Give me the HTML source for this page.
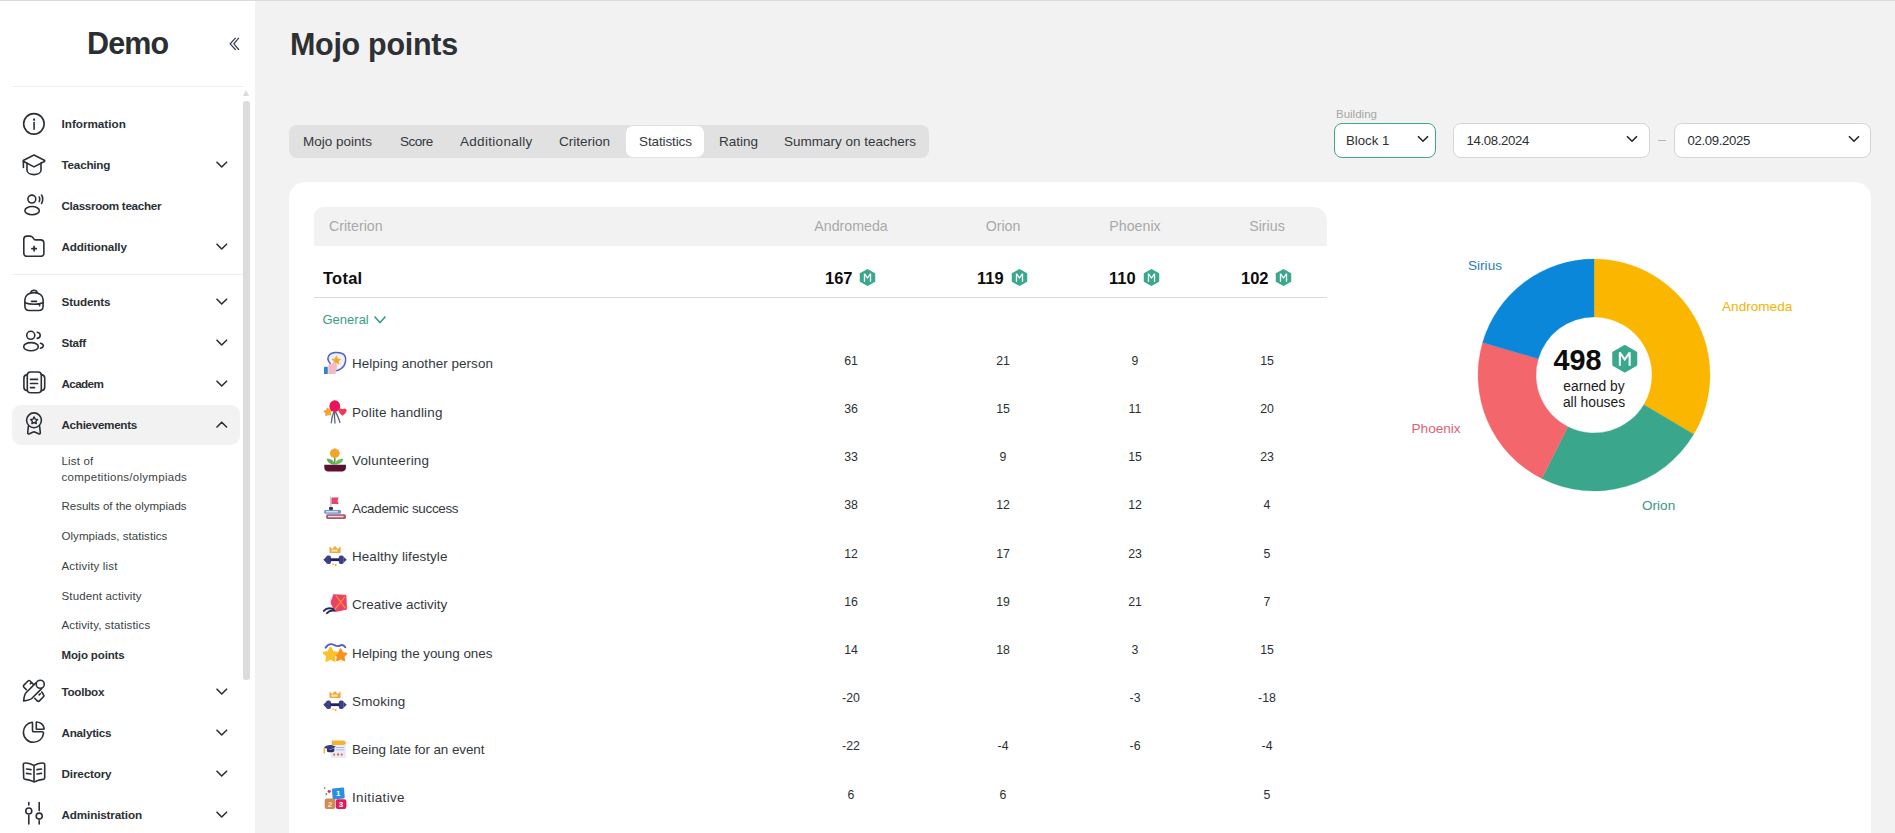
<!DOCTYPE html>
<html><head><meta charset="utf-8">
<style>
*{box-sizing:border-box;margin:0;padding:0}
html,body{width:1895px;height:833px;overflow:hidden;background:#f2f2f2;font-family:"Liberation Sans",sans-serif;color:#2b3035}
.abs{position:absolute;white-space:nowrap}
#topline{position:absolute;left:0;top:0;width:1895px;height:1px;background:#dcdcdc;z-index:5}
#side{position:absolute;left:0;top:0;width:255px;height:833px;background:#fff}
.logo{position:absolute;left:87px;top:25px;font-size:30.5px;line-height:36px;font-weight:700;color:#2b2f31;letter-spacing:-0.9px}
.sdiv{position:absolute;left:12px;width:232px;height:1px;background:#efefef}
.scroll{position:absolute;left:243px;width:7px;background:#dcdcdc;border-radius:0}
.item{position:absolute;left:12px;width:228px;height:40px}
.item.active{background:#f2f2f2;border-radius:9px}
.item .ic{position:absolute;left:10px;top:8px;width:24px;height:24px;overflow:visible}
.item .lb{position:absolute;left:49.5px;top:12px;font-size:11.7px;font-weight:700;color:#2b3035;line-height:16px}
.item .ch{position:absolute;left:204px;top:15px;width:11px;height:9px;overflow:visible}
.sub{position:absolute;left:61.5px;font-size:11.5px;color:#3a3f44;line-height:16px}
.sub.b{font-weight:700;color:#2b3035}
h1{position:absolute;left:290px;top:26px;font-size:30.5px;font-weight:700;color:#2e3133;line-height:36px;letter-spacing:-0.3px}
#tabs{position:absolute;left:289px;top:125px;width:640px;height:33px;background:#e1e1e1;border-radius:8px}
.tab{position:absolute;top:133px;font-size:13.5px;color:#34393d;line-height:17px}
#acttab{position:absolute;left:626px;top:126px;width:78px;height:31px;background:#fff;border-radius:7px}
.lbl{position:absolute;left:1336px;top:107px;font-size:11.5px;color:#a6a6a6;line-height:14px}
.sel{position:absolute;top:123px;height:35px;background:#fff;border:1px solid #d5d5d5;border-radius:8px}
.sel .t{position:absolute;top:8px;font-size:13.2px;color:#2b3035;line-height:17px}
.sel svg{position:absolute;top:11px}
#card{position:absolute;left:289px;top:182px;width:1582px;height:700px;background:#fff;border-radius:16px}
#thead{position:absolute;left:314px;top:207px;width:1013px;height:39px;background:#f2f2f2;border-radius:9px 14px 0 0}
.th{position:absolute;top:217px;font-size:14.2px;color:#a9a9a9;line-height:18px}
.c{text-align:center;width:120px}
.tot{position:absolute;top:268px;font-size:16.5px;font-weight:700;color:#0d0d0d;line-height:20px}
.badge{position:absolute;width:17px;height:17px}
.row{position:absolute;left:322px;height:24px}
.row .ti{position:absolute;left:0;top:0;width:24px;height:24px}
.rl{position:absolute;left:352px;font-size:13.45px;color:#33383c;line-height:17px}
.v{position:absolute;font-size:12.3px;color:#2b2f33;line-height:15px;text-align:center;width:60px}
.pl{position:absolute;font-size:13.6px;line-height:17px}
</style></head><body>
<div id="topline"></div>
<div id="side">
  <div class="logo">Demo</div>
  <svg class="abs" style="left:229px;top:36px" width="12" height="16" viewBox="0 0 12 16"><path d="M6.4 2.2 L1.2 7.8 L6.4 13.5 M9.6 2.2 L4.9 7.8 L9.6 13.5" fill="none" stroke="#2f3a4c" stroke-width="1.2" stroke-linecap="round"/></svg>
  <div class="sdiv" style="top:86px"></div>
  <div class="sdiv" style="top:274px"></div>
  <div class="scroll" style="top:90px;height:6px;background:transparent;border-left:3.5px solid transparent;border-right:3.5px solid transparent;border-bottom:6px solid #dcdcdc;width:0"></div>
  <div class="scroll" style="top:101px;height:579px;border-radius:3px"></div>
  <div class="item" style="top:103.5px"><svg class="ic" viewBox="0 0 24 24"><circle cx="11.9" cy="11.85" r="10.25" fill="none" stroke="#2b3035" stroke-width="1.6" stroke-linecap="round" stroke-linejoin="round"/><path d="M12.1 10.6v6.6" fill="none" stroke="#2b3035" stroke-width="1.6" stroke-linecap="round" stroke-linejoin="round"/><path d="M12.1 7.3v.6" fill="none" stroke="#2b3035" stroke-width="1.9" stroke-linecap="round" stroke-linejoin="round"/></svg><div class="lb" style="letter-spacing:0.000px">Information</div></div>
<div class="item" style="top:145px"><svg class="ic" viewBox="0 0 24 24"><path d="M12 2 L22.3 7.2 Q23.2 7.9 22.3 8.5 L12 13.9 L1.7 8.5 Q0.8 7.9 1.7 7.2 Z" fill="none" stroke="#2b3035" stroke-width="1.6" stroke-linecap="round" stroke-linejoin="round"/><path d="M5 10v7.3c0 2.6 3.2 4.3 7 4.3s7-1.700 7-4.300V10" fill="none" stroke="#2b3035" stroke-width="1.6" stroke-linecap="round" stroke-linejoin="round"/><path d="M1.4 8.2v6.2" fill="none" stroke="#2b3035" stroke-width="1.6" stroke-linecap="round" stroke-linejoin="round"/></svg><div class="lb" style="letter-spacing:-0.214px">Teaching</div><svg class="ch" viewBox="0 0 11 9"><path d="M1 2.200L5.700 7 10.600 2.200" fill="none" stroke="#2b3035" stroke-width="1.600" stroke-linecap="round" stroke-linejoin="round"/></svg></div>
<div class="item" style="top:185.5px"><svg class="ic" viewBox="0 0 24 24"><circle cx="9.85" cy="5.1" r="3.95" fill="none" stroke="#2b3035" stroke-width="1.6" stroke-linecap="round" stroke-linejoin="round"/><ellipse cx="10.1" cy="16.65" rx="7.2" ry="4.1" fill="none" stroke="#2b3035" stroke-width="1.6" stroke-linecap="round" stroke-linejoin="round"/><path d="M17.2 3c.7.9.7 3.6 0 4.5 M19.5 1c1.6 2 1.6 6.5 0 8.500" fill="none" stroke="#2b3035" stroke-width="1.6" stroke-linecap="round" stroke-linejoin="round"/></svg><div class="lb" style="letter-spacing:-0.331px">Classroom teacher</div></div>
<div class="item" style="top:226.5px"><svg class="ic" viewBox="0 0 24 24"><path d="M1.8 4.2c0-2 1.4-3.100 3.200-3.100h3.100c1.200 0 2 .5 2.700 1.400l1.100 1.400c.6.700 1.100 1 2 1h4.600c1.800 0 3.400 1.300 3.400 3.300V18c0 2-1.500 3.300-3.300 3.300H5.100C3.300 21.300 1.800 20 1.800 18z" fill="none" stroke="#2b3035" stroke-width="1.6" stroke-linecap="round" stroke-linejoin="round"/><path d="M12.1 11.4v4.4 M9.9 13.650h4.4" fill="none" stroke="#2b3035" stroke-width="1.7" stroke-linecap="round" stroke-linejoin="round"/></svg><div class="lb" style="letter-spacing:-0.136px">Additionally</div><svg class="ch" viewBox="0 0 11 9"><path d="M1 2.200L5.700 7 10.600 2.200" fill="none" stroke="#2b3035" stroke-width="1.600" stroke-linecap="round" stroke-linejoin="round"/></svg></div>
<div class="item" style="top:281.5px"><svg class="ic" viewBox="0 0 24 24"><path d="M8.800 2.600c.3-1.600 1.300-2.400 3.200-2.400s2.900.8 3.200 2.400" fill="none" stroke="#2b3035" stroke-width="1.6" stroke-linecap="round" stroke-linejoin="round"/><path d="M2.900 9.500c0-4 3.700-6.900 9.100-6.900s9.100 2.900 9.100 6.900v6.800c0 2.700-1.800 4.200-4.300 4.200H7.200c-2.500 0-4.300-1.500-4.300-4.200z" fill="none" stroke="#2b3035" stroke-width="1.6" stroke-linecap="round" stroke-linejoin="round"/><path d="M2.900 12.800c2.600 1 5.600 1.500 9.100 1.500s6.500-.5 9.100-1.500 M9.500 11.400h5 M17.600 14.500v1.300" fill="none" stroke="#2b3035" stroke-width="1.6" stroke-linecap="round" stroke-linejoin="round"/></svg><div class="lb" style="letter-spacing:-0.129px">Students</div><svg class="ch" viewBox="0 0 11 9"><path d="M1 2.200L5.700 7 10.600 2.200" fill="none" stroke="#2b3035" stroke-width="1.600" stroke-linecap="round" stroke-linejoin="round"/></svg></div>
<div class="item" style="top:322.5px"><svg class="ic" viewBox="0 0 24 24"><circle cx="8.75" cy="4.3" r="4" fill="none" stroke="#2b3035" stroke-width="1.6" stroke-linecap="round" stroke-linejoin="round"/><ellipse cx="9" cy="15.7" rx="7.3" ry="4.1" fill="none" stroke="#2b3035" stroke-width="1.6" stroke-linecap="round" stroke-linejoin="round"/><path d="M15.200 1.200c2 .3 3 1.400 3 3.100s-1 2.800-3 3.100 M18.500 12.300c1.700.5 2.800 1.400 2.800 2.500s-1.100 2-2.800 2.500" fill="none" stroke="#2b3035" stroke-width="1.6" stroke-linecap="round" stroke-linejoin="round"/></svg><div class="lb" style="letter-spacing:-0.325px">Staff</div><svg class="ch" viewBox="0 0 11 9"><path d="M1 2.200L5.700 7 10.600 2.200" fill="none" stroke="#2b3035" stroke-width="1.600" stroke-linecap="round" stroke-linejoin="round"/></svg></div>
<div class="item" style="top:363.5px"><svg class="ic" viewBox="0 0 24 24"><rect x="5.3" y="0" width="14" height="20.800" rx="3.3" fill="none" stroke="#2b3035" stroke-width="1.6" stroke-linecap="round" stroke-linejoin="round"/><path d="M5.300 2.600C3 2.900 1.900 4 1.900 6v9.300c0 2 1.100 3.100 3.400 3.400 M19.300 2.600c2.300.3 3.400 1.400 3.400 3.400v9.300c0 2-1.100 3.100-3.400 3.400" fill="none" stroke="#2b3035" stroke-width="1.6" stroke-linecap="round" stroke-linejoin="round"/><path d="M8.500 7.400h7 M8.500 11.500h7 M8.500 15.600h4" fill="none" stroke="#2b3035" stroke-width="1.7" stroke-linecap="round" stroke-linejoin="round"/></svg><div class="lb" style="letter-spacing:-0.640px">Academ</div><svg class="ch" viewBox="0 0 11 9"><path d="M1 2.200L5.700 7 10.600 2.200" fill="none" stroke="#2b3035" stroke-width="1.600" stroke-linecap="round" stroke-linejoin="round"/></svg></div>
<div class="item active" style="top:404.5px"><svg class="ic" viewBox="0 0 24 24"><circle cx="12" cy="7.3" r="7.4" fill="none" stroke="#2b3035" stroke-width="1.6" stroke-linecap="round" stroke-linejoin="round"/><path d="M12.100 3.900l1.100 2.200 2.400.4-1.700 1.700.4 2.400-2.200-1.100-2.200 1.100.4-2.400-1.700-1.700 2.400-.4z" fill="none" stroke="#2b3035" stroke-width="1.4" stroke-linecap="round" stroke-linejoin="round"/><path d="M6.400 13L5.700 19.500c-.1 1.200.7 1.700 1.700 1.300l3.300-1.600c.9-.4 1.700-.4 2.600 0l3.300 1.600c1 .4 1.800-.1 1.700-1.300L17.600 13" fill="none" stroke="#2b3035" stroke-width="1.6" stroke-linecap="round" stroke-linejoin="round"/></svg><div class="lb" style="letter-spacing:-0.318px">Achievements</div><svg class="ch" viewBox="0 0 11 9"><path d="M1 7L5.700 2.200 10.600 7" fill="none" stroke="#2b3035" stroke-width="1.600" stroke-linecap="round" stroke-linejoin="round"/></svg></div>
<div class="item" style="top:671.5px"><svg class="ic" viewBox="0 0 24 24"><path d="M13.900 2.900L4 12.800C2.600 14.200 2 17.500 1.600 20.900 5 20.500 8.300 19.900 9.700 18.500L19.600 8.600" fill="none" stroke="#2b3035" stroke-width="1.6" stroke-linecap="round" stroke-linejoin="round"/><circle cx="18.250" cy="4.250" r="4" fill="none" stroke="#2b3035" stroke-width="1.6" stroke-linecap="round" stroke-linejoin="round"/><path d="M4.300 9.600L1.900 7.200c-.6-.6-.6-1.500 0-2.100L6 1c.6-.6 1.500-.6 2.100 0l3.100 3.100 M9.600 2.400L8.400 3.600" fill="none" stroke="#2b3035" stroke-width="1.6" stroke-linecap="round" stroke-linejoin="round"/><path d="M12.700 18.300l2.600 2.600c.6.6 1.500.6 2.100 0l4.100-4.100c.6-.6.6-1.500 0-2.100L19.800 12 M18.300 13.700L17.100 14.900" fill="none" stroke="#2b3035" stroke-width="1.6" stroke-linecap="round" stroke-linejoin="round"/></svg><div class="lb" style="letter-spacing:-0.283px">Toolbox</div><svg class="ch" viewBox="0 0 11 9"><path d="M1 2.200L5.700 7 10.600 2.200" fill="none" stroke="#2b3035" stroke-width="1.600" stroke-linecap="round" stroke-linejoin="round"/></svg></div>
<div class="item" style="top:712.5px"><svg class="ic" viewBox="0 0 24 24"><path d="M10.300 1.200C5.200 1.700 1.400 6 1.400 11.300c0 5.500 4.500 10 10 10 5.300 0 9.600-3.800 10.100-9 .1-.9-.5-1.500-1.300-1.500h-8.300c-.9 0-1.400-.5-1.400-1.400V2.600c0-.9-.4-1.400-.2-1.400z" fill="none" stroke="#2b3035" stroke-width="1.6" stroke-linecap="round" stroke-linejoin="round"/><path d="M14.300 1.500v6.200c0 .4.3.6.6.6h6.400c.6 0 .9-.4.8-1-.7-3.200-3.200-5.600-6.400-6.300-.8-.2-1.400.1-1.400.5z" fill="none" stroke="#2b3035" stroke-width="1.6" stroke-linecap="round" stroke-linejoin="round"/></svg><div class="lb" style="letter-spacing:-0.237px">Analytics</div><svg class="ch" viewBox="0 0 11 9"><path d="M1 2.200L5.700 7 10.600 2.200" fill="none" stroke="#2b3035" stroke-width="1.600" stroke-linecap="round" stroke-linejoin="round"/></svg></div>
<div class="item" style="top:753.5px"><svg class="ic" viewBox="0 0 24 24"><path d="M1.300 2.700c0-1 .7-1.700 1.800-1.700 1.700 0 3.700.3 5.600 1.100l2.200.9c.7.3 1.500.3 2.200 0l2.200-.9C17.200 1.300 19.200 1 20.900 1c1.100 0 1.800.7 1.800 1.700v13c0 1-.7 1.600-1.700 1.700-1.800.2-3.600.5-5.300 1.200l-2.300 1c-.8.300-1.600.300-2.400 0l-2.300-1c-1.700-.7-3.500-1-5.300-1.200-1-.1-1.700-.7-1.700-1.700z M12 3.500v15.500" fill="none" stroke="#2b3035" stroke-width="1.6" stroke-linecap="round" stroke-linejoin="round"/><path d="M4.500 7l4.500.6 M4.500 11.400l4.500.6 M15 7.600l4.500-.6 M15 12l4.500-.6" fill="none" stroke="#2b3035" stroke-width="1.6" stroke-linecap="round" stroke-linejoin="round"/></svg><div class="lb" style="letter-spacing:-0.150px">Directory</div><svg class="ch" viewBox="0 0 11 9"><path d="M1 2.200L5.700 7 10.600 2.200" fill="none" stroke="#2b3035" stroke-width="1.600" stroke-linecap="round" stroke-linejoin="round"/></svg></div>
<div class="item" style="top:794.5px"><svg class="ic" viewBox="0 0 24 24"><path d="M6.800 -.4v2.400 M6.800 12.400V21 M17.200 -.4v8 M17.200 17.700V21" fill="none" stroke="#2b3035" stroke-width="1.6" stroke-linecap="round" stroke-linejoin="round"/><circle cx="6.800" cy="8.050" r="3" fill="none" stroke="#2b3035" stroke-width="1.6" stroke-linecap="round" stroke-linejoin="round"/><circle cx="17.200" cy="13.100" r="3" fill="none" stroke="#2b3035" stroke-width="1.6" stroke-linecap="round" stroke-linejoin="round"/></svg><div class="lb" style="letter-spacing:-0.146px">Administration</div><svg class="ch" viewBox="0 0 11 9"><path d="M1 2.200L5.700 7 10.600 2.200" fill="none" stroke="#2b3035" stroke-width="1.600" stroke-linecap="round" stroke-linejoin="round"/></svg></div>
<div class="sub" style="top:452.8px;letter-spacing:0.167px">List of</div>
<div class="sub" style="top:468.6px;letter-spacing:0.276px">competitions/olympiads</div>
<div class="sub" style="top:497.8px;letter-spacing:-0.009px">Results of the olympiads</div>
<div class="sub" style="top:527.5px;letter-spacing:0.050px">Olympiads, statistics</div>
<div class="sub" style="top:558px;letter-spacing:0.192px">Activity list</div>
<div class="sub" style="top:587.9px;letter-spacing:0.140px">Student activity</div>
<div class="sub" style="top:616.8px;letter-spacing:0.137px">Activity, statistics</div>
<div class="sub b" style="top:646.7px;letter-spacing:-0.130px">Mojo points</div>

</div>
<h1>Mojo points</h1>
<div id="tabs"></div>
<div id="acttab"></div>
<div class="tab" style="left:303px">Mojo points</div>
<div class="tab" style="left:400px;letter-spacing:-0.5px">Score</div>
<div class="tab" style="left:460px;letter-spacing:0.3px">Additionally</div>
<div class="tab" style="left:559px">Criterion</div>
<div class="tab" style="left:639px;letter-spacing:-0.12px">Statistics</div>
<div class="tab" style="left:719px">Rating</div>
<div class="tab" style="left:784px">Summary on teachers</div>

<div class="lbl">Building</div>
<div class="sel" style="left:1334px;width:102px;border-color:#3fa68c"><div class="t" style="left:11px">Block 1</div><svg style="left:82px" width="12" height="8" viewBox="0 0 12 8"><path d="M1 1.2 L6 6.2 L11 1.2" fill="none" stroke="#1f2326" stroke-width="1.6"/></svg></div>
<div class="sel" style="left:1453px;width:197px"><div class="t" style="left:12.5px;letter-spacing:-0.35px">14.08.2024</div><svg style="left:172px" width="12" height="8" viewBox="0 0 12 8"><path d="M1 1.2 L6 6.2 L11 1.2" fill="none" stroke="#1f2326" stroke-width="1.6"/></svg></div>
<div class="abs" style="left:1658px;top:140px;width:8px;height:1px;background:#b5b5b5"></div>
<div class="sel" style="left:1674px;width:197px"><div class="t" style="left:12.5px;letter-spacing:-0.35px">02.09.2025</div><svg style="left:173px" width="12" height="8" viewBox="0 0 12 8"><path d="M1 1.2 L6 6.2 L11 1.2" fill="none" stroke="#1f2326" stroke-width="1.6"/></svg></div>

<div id="card"></div>
<div id="thead"></div>
<div class="th" style="left:329px">Criterion</div>
<div class="th c" style="left:791px">Andromeda</div>
<div class="th c" style="left:943px">Orion</div>
<div class="th c" style="left:1075px">Phoenix</div>
<div class="th c" style="left:1207px">Sirius</div>
<div class="tot" style="left:323px;letter-spacing:0.25px">Total</div>
<div class="tot" style="left:825px">167</div><svg class="badge" style="left:859px;top:269px;width:17px;height:17px" viewBox="0 0 20 20"><path d="M10 1.300 L17.900 5.700 V14.300 L10 18.700 L2.100 14.300 V5.700 Z" fill="#3aa88d" stroke="#3aa88d" stroke-width="2.400" stroke-linejoin="round"/><path d="M5.700 15V5.300H7.200L10 9.300 12.800 5.300H14.300V15H12.800V7.900L10 11.800 7.200 7.900V15Z" fill="#fff"/></svg>
<div class="tot" style="left:977px">119</div><svg class="badge" style="left:1011px;top:269px;width:17px;height:17px" viewBox="0 0 20 20"><path d="M10 1.300 L17.900 5.700 V14.300 L10 18.700 L2.100 14.300 V5.700 Z" fill="#3aa88d" stroke="#3aa88d" stroke-width="2.400" stroke-linejoin="round"/><path d="M5.700 15V5.300H7.200L10 9.300 12.800 5.300H14.300V15H12.800V7.900L10 11.800 7.200 7.900V15Z" fill="#fff"/></svg>
<div class="tot" style="left:1109px">110</div><svg class="badge" style="left:1143px;top:269px;width:17px;height:17px" viewBox="0 0 20 20"><path d="M10 1.300 L17.900 5.700 V14.300 L10 18.700 L2.100 14.300 V5.700 Z" fill="#3aa88d" stroke="#3aa88d" stroke-width="2.400" stroke-linejoin="round"/><path d="M5.700 15V5.300H7.200L10 9.300 12.800 5.300H14.300V15H12.800V7.900L10 11.800 7.200 7.900V15Z" fill="#fff"/></svg>
<div class="tot" style="left:1241px">102</div><svg class="badge" style="left:1275px;top:269px;width:17px;height:17px" viewBox="0 0 20 20"><path d="M10 1.300 L17.900 5.700 V14.300 L10 18.700 L2.100 14.300 V5.700 Z" fill="#3aa88d" stroke="#3aa88d" stroke-width="2.400" stroke-linejoin="round"/><path d="M5.700 15V5.300H7.200L10 9.300 12.800 5.300H14.300V15H12.800V7.900L10 11.800 7.200 7.900V15Z" fill="#fff"/></svg>
<div class="abs" style="left:322.5px;top:311px;font-size:13px;color:#3a9e86;line-height:17px">General</div><svg class="abs" style="left:373px;top:315px" width="14" height="10" viewBox="0 0 14 10"><path d="M1.500 1.500L7 7.500 12.500 1.500" fill="none" stroke="#3a9e86" stroke-width="1.700"/></svg>
<svg class="abs" style="left:322px;top:351px;overflow:visible" width="24" height="24" viewBox="0 0 24 24"><path d="M8.200 12.500C5.800 9.800 5 6.500 7.500 3.800 10 1.200 15.500 .900 19.500 2.300c3.600 1.300 4.600 4.500 4 8-.6 3.700-3.300 7.300-6.800 8.700-1.400.6-2.800.8-3.800.6" fill="#eef1fb" stroke="#4f5fc9" stroke-width="1.500" stroke-linecap="round"/><path d="M14.300 4.300l1.500 3.100 3.400.5-2.500 2.400.6 3.400-3-1.600-3 1.600.6-3.400-2.500-2.400 3.400-.5z" fill="#f4a823"/><path d="M6.300 15c0-1.100.9-2 2-2h1.500c.8 0 1.300-.5 1.500-1.200l.4-1.200c.2-.6 1.200-.5 1.300.2l.3 2.200h.5c.9 0 1.500.8 1.300 1.700l-1.300 7c-.2.8-.8 1.300-1.600 1.300H6.300z" fill="#f3b9c4"/><rect x="2" y="15.800" width="3.800" height="7.200" rx=".6" fill="#2a87c9"/></svg><div class="rl" style="top:355px;letter-spacing:0.057px">Helping another person</div><div class="v" style="left:821px;top:354px">61</div><div class="v" style="left:973px;top:354px">21</div><div class="v" style="left:1105px;top:354px">9</div><div class="v" style="left:1237px;top:354px">15</div>
<svg class="abs" style="left:322px;top:400px;overflow:visible" width="24" height="24" viewBox="0 0 24 24"><path d="M12.600 12c-.3 3.500 0 7.500.4 11 M11.800 11.800C10.500 15 9.600 19 9.300 22.800 M13.800 12.200c1.500 3.200 3.200 6.800 4.200 10.300" stroke="#5b6478" stroke-width="1.300" fill="none" stroke-linecap="round"/><path d="M5.600 8.400l1.300 2 2.400.2-1.500 1.900.6 2.300-2.300-.8-2.100 1.200.1-2.400-1.800-1.600 2.300-.6z" fill="#f5a530" stroke="#f5a530" stroke-width="1.600" stroke-linejoin="round"/><path d="M20.600 9.300c1.400-1.600 4.200-.8 4 1.500-.2 1.900-2.500 3.800-4 5-1.500-1.200-3.900-3.100-4.100-5-.2-2.300 2.700-3.100 4.100-1.500z" fill="#ef3a55"/><ellipse cx="12.800" cy="6.200" rx="5.400" ry="5.900" fill="#e8155a"/></svg><div class="rl" style="top:404px;letter-spacing:0.157px">Polite handling</div><div class="v" style="left:821px;top:402px">36</div><div class="v" style="left:973px;top:402px">15</div><div class="v" style="left:1105px;top:402px">11</div><div class="v" style="left:1237px;top:402px">20</div>
<svg class="abs" style="left:322px;top:448px;overflow:visible" width="24" height="24" viewBox="0 0 24 24"><path d="M12.800 16V9.500" stroke="#4a9a45" stroke-width="1.400"/><path d="M12.800 16.600c-4 0-7.200-1.500-8.200-5.800 4.200-.3 7.300 1.800 8.200 5.800z" fill="#5bb04f"/><path d="M12.800 16.600c4 0 7.600-1.500 8.600-5.800-4.200-.3-7.700 1.800-8.600 5.800z" fill="#6cbf57"/><circle cx="15.70" cy="5.30" r="2.1" fill="#f4a52a"/><circle cx="14.85" cy="7.35" r="2.1" fill="#f4a52a"/><circle cx="12.80" cy="8.20" r="2.1" fill="#f4a52a"/><circle cx="10.75" cy="7.35" r="2.1" fill="#f4a52a"/><circle cx="9.90" cy="5.30" r="2.1" fill="#f4a52a"/><circle cx="10.75" cy="3.25" r="2.1" fill="#f4a52a"/><circle cx="12.80" cy="2.40" r="2.1" fill="#f4a52a"/><circle cx="14.85" cy="3.25" r="2.1" fill="#f4a52a"/><circle cx="12.800" cy="5.300" r="3.200" fill="#f4a52a"/><path d="M2.300 16.700h21.600v3.400c0 1.900-1.500 3.300-3.400 3.300H5.700c-1.900 0-3.400-1.400-3.400-3.300z" fill="#5c0f33"/></svg><div class="rl" style="top:452px;letter-spacing:0.209px">Volunteering</div><div class="v" style="left:821px;top:450px">33</div><div class="v" style="left:973px;top:450px">9</div><div class="v" style="left:1105px;top:450px">15</div><div class="v" style="left:1237px;top:450px">23</div>
<svg class="abs" style="left:322px;top:496px;overflow:visible" width="24" height="24" viewBox="0 0 24 24"><rect x="8" y=".4" width="1.500" height="12.500" fill="#c8ccd6"/><path d="M9.500 1.400h7.200l-1.200 3.300 1.200 3.400H9.500z" fill="#e8436a"/><rect x="7" y="11" width="4" height="3" rx="1" fill="#2e3a5c"/><rect x="2.200" y="13.900" width="16.800" height="3.800" rx="1.200" fill="#6f96cf"/><rect x="4" y="15.200" width="12" height="1.200" fill="#eef3fb"/><rect x="4.200" y="18.200" width="19.700" height="4.800" rx="1.500" fill="#a8566e"/><rect x="6" y="19.800" width="15.500" height="1.500" fill="#f3dce2"/></svg><div class="rl" style="top:500px;letter-spacing:-0.313px">Academic success</div><div class="v" style="left:821px;top:498px">38</div><div class="v" style="left:973px;top:498px">12</div><div class="v" style="left:1105px;top:498px">12</div><div class="v" style="left:1237px;top:498px">4</div>
<svg class="abs" style="left:322px;top:544px;overflow:visible" width="24" height="24" viewBox="0 0 24 24"><path d="M7.500 2.300l2.700 2.600L13 2l2.800 2.900 2.800-2.600V9H7.500z" fill="#f2a93a"/><rect x="9.500" y="5.600" width="6" height="2" fill="#fde6b8"/><rect x="4" y="11.400" width="5" height="8.600" rx="2" fill="#3b3f86"/><rect x="16.800" y="11.400" width="5" height="8.600" rx="2" fill="#3b3f86"/><path d="M1.300 15.700l2.700-2.800v5.600z M24.800 15.700L21.800 12.900v5.600z" fill="#3b3f86"/><rect x="8.500" y="14.300" width="8.800" height="2.800" fill="#1f2258"/><circle cx="11" cy="20.300" r=".8" fill="#f2a42a"/><circle cx="13.600" cy="21" r="1" fill="#f2a42a"/></svg><div class="rl" style="top:548px;letter-spacing:0.081px">Healthy lifestyle</div><div class="v" style="left:821px;top:547px">12</div><div class="v" style="left:973px;top:547px">17</div><div class="v" style="left:1105px;top:547px">23</div><div class="v" style="left:1237px;top:547px">5</div>
<svg class="abs" style="left:322px;top:592px;overflow:visible" width="24" height="24" viewBox="0 0 24 24"><path d="M11.400 2.800L23.900 3.300 24.400 17.200 12.800 19.600 9 10.500z" fill="#ee3f66" stroke="#ee3f66" stroke-width="1" stroke-linejoin="round"/><path d="M13.800 3.300L23.400 16.300 M23 4.700L12.300 18.200" stroke="#f7903a" stroke-width="1.300"/><path d="M10.500 4.500C8.600 6.500 7.800 9.500 8.600 12.500" stroke="#bfe6ee" stroke-width="1.100" fill="none"/><path d="M12.300 18.600c-2.800-.4-5.400.4-7.300 2.600" stroke="#262a5e" stroke-width="1.900" fill="none" stroke-linecap="round"/><path d="M11.500 17.300c-3.600-1.600-7.400-1-9.700 1.600" stroke="#262a5e" stroke-width="1.900" fill="none" stroke-linecap="round"/></svg><div class="rl" style="top:596px;letter-spacing:0.019px">Creative activity</div><div class="v" style="left:821px;top:595px">16</div><div class="v" style="left:973px;top:595px">19</div><div class="v" style="left:1105px;top:595px">21</div><div class="v" style="left:1237px;top:595px">7</div>
<svg class="abs" style="left:322px;top:641px;overflow:visible" width="24" height="24" viewBox="0 0 24 24"><path d="M3.600 6.800c2.500-4 5.500-4.400 8.600-2.800 2.200 1.100 3.500 1.800 5.500.6 2-1.100 4.200-.6 5.600 1.600" fill="none" stroke="#4f5fc9" stroke-width="1.900" stroke-linecap="round"/><path d="M18.600 8.300l1.900 3.700 4 .6-2.900 2.800.7 4-3.700-1.900-3.600 1.900.7-4-2.900-2.800 4-.6z" fill="#f7931e" stroke="#f7931e" stroke-width="1.800" stroke-linejoin="round"/><path d="M8.500 6.600l2.200 4.400 4.800.7-3.500 3.400.8 4.800-4.300-2.300-4.300 2.300.8-4.800-3.500-3.400 4.800-.7z" fill="#fcc02a" stroke="#fcc02a" stroke-width="1.800" stroke-linejoin="round"/></svg><div class="rl" style="top:645px;letter-spacing:-0.038px">Helping the young ones</div><div class="v" style="left:821px;top:643px">14</div><div class="v" style="left:973px;top:643px">18</div><div class="v" style="left:1105px;top:643px">3</div><div class="v" style="left:1237px;top:643px">15</div>
<svg class="abs" style="left:322px;top:689px;overflow:visible" width="24" height="24" viewBox="0 0 24 24"><path d="M7.500 2.300l2.700 2.600L13 2l2.800 2.900 2.800-2.600V9H7.500z" fill="#f2a93a"/><rect x="9.500" y="5.600" width="6" height="2" fill="#fde6b8"/><rect x="4" y="11.400" width="5" height="8.600" rx="2" fill="#3b3f86"/><rect x="16.800" y="11.400" width="5" height="8.600" rx="2" fill="#3b3f86"/><path d="M1.300 15.700l2.700-2.800v5.600z M24.800 15.700L21.800 12.900v5.600z" fill="#3b3f86"/><rect x="8.500" y="14.300" width="8.800" height="2.800" fill="#1f2258"/><circle cx="11" cy="20.300" r=".8" fill="#f2a42a"/><circle cx="13.600" cy="21" r="1" fill="#f2a42a"/></svg><div class="rl" style="top:693px;letter-spacing:0.167px">Smoking</div><div class="v" style="left:821px;top:691px">-20</div><div class="v" style="left:1105px;top:691px">-3</div><div class="v" style="left:1237px;top:691px">-18</div>
<svg class="abs" style="left:322px;top:737px;overflow:visible" width="24" height="24" viewBox="0 0 24 24"><rect x="8.500" y="2.700" width="15.400" height="18.300" rx="1" fill="#e6ebfa"/><path d="M10 3.700h11.800l2.600 2.200-2.600 2.100H10z" fill="#f6b324"/><path d="M14 10.500h8 M14 12.800h8" stroke="#a9bbe6" stroke-width="1"/><path d="M11 17.800l1.100-1.800 1.100 1.800-1 1.100z M14.800 17.600l1.200-1.900 1.300 1.900-1.200 1.400z M18.600 17.800l1.100-1.800 1.200 1.800-1.100 1.100z" fill="#ef5b3a"/><path d="M1.800 10.800C4 7.700 9.500 6.900 13.800 9.700L8.500 12.800z" fill="#3a3d84"/><path d="M5 11.300v3c0 .8 1.500 1 3.500 1s3.800-.6 3.800-1.400v-3l-3.800 2z" fill="#2b2e6a"/><path d="M2.300 10.500v6" stroke="#f6b324" stroke-width="1.500"/></svg><div class="rl" style="top:741px;letter-spacing:-0.095px">Being late for an event</div><div class="v" style="left:821px;top:739px">-22</div><div class="v" style="left:973px;top:739px">-4</div><div class="v" style="left:1105px;top:739px">-6</div><div class="v" style="left:1237px;top:739px">-4</div>
<svg class="abs" style="left:322px;top:785px;overflow:visible" width="24" height="24" viewBox="0 0 24 24"><path d="M11 3.400l9.600-.8c.9-.1 1.400.4 1.500 1.300l.6 8.200c.1.900-.4 1.400-1.300 1.500l-9.300.9c-.9.1-1.400-.4-1.500-1.300L10 4.800c-.1-.9.200-1.300 1-1.400z" fill="#2a8fe0"/><text x="16.200" y="11.300" font-size="8" font-family="Liberation Sans" font-weight="700" fill="#fff" text-anchor="middle">1</text><rect x="2.700" y="13.400" width="10.600" height="10.600" rx="2.200" fill="#cf8a55"/><text x="8" y="21.700" font-size="8" font-family="Liberation Sans" font-weight="700" fill="#f4e2cf" text-anchor="middle">2</text><rect x="13.800" y="14.300" width="10.600" height="9.700" rx="2" fill="#e0195e"/><text x="19.100" y="22" font-size="8" font-family="Liberation Sans" font-weight="700" fill="#fff" text-anchor="middle">3</text><path d="M2.700 1.800l1 1.200-1 1.300-1-1.300z M4.400 7.700l1.200 1.400-1.200 1.400-1.200-1.400z" fill="#8a8a5a"/><path d="M7.200 5.600c.6-.7 1.800-.3 1.700.6-.1.700-1 1.400-1.700 1.900-.7-.5-1.600-1.200-1.700-1.900-.1-.9 1.100-1.300 1.700-.6z" fill="#e0195e"/></svg><div class="rl" style="top:789px;letter-spacing:0.367px">Initiative</div><div class="v" style="left:821px;top:788px">6</div><div class="v" style="left:973px;top:788px">6</div><div class="v" style="left:1237px;top:788px">5</div>

<div class="abs" style="left:314px;top:297px;width:1013px;height:1px;background:#dadada"></div>
<svg class="abs" style="left:0;top:0" width="1895" height="833"><path d="M1594.00,259.00 A116,116 0 0 1 1693.72,434.26 L1643.86,404.63 A58,58 0 0 0 1594.00,317.00 Z" fill="#fbb600" stroke="#fbb600" stroke-width="0.3"/><path d="M1693.72,434.26 A116,116 0 0 1 1541.79,478.59 L1567.90,426.79 A58,58 0 0 0 1643.86,404.63 Z" fill="#3aa68c" stroke="#3aa68c" stroke-width="0.3"/><path d="M1541.79,478.59 A116,116 0 0 1 1482.64,342.51 L1538.32,358.76 A58,58 0 0 0 1567.90,426.79 Z" fill="#f2666c" stroke="#f2666c" stroke-width="0.3"/><path d="M1482.64,342.51 A116,116 0 0 1 1594.00,259.00 L1594.00,317.00 A58,58 0 0 0 1538.32,358.76 Z" fill="#0a87d8" stroke="#0a87d8" stroke-width="0.3"/></svg><div class="abs" style="left:1553.5px;top:342.5px;font-size:28.8px;font-weight:700;color:#0d0d0d;line-height:34px">498</div><svg class="badge" style="left:1611px;top:345px;width:27.5px;height:27.5px" viewBox="0 0 20 20"><path d="M10 1.300 L17.900 5.700 V14.300 L10 18.700 L2.100 14.300 V5.700 Z" fill="#3aa88d" stroke="#3aa88d" stroke-width="2.400" stroke-linejoin="round"/><path d="M5.700 15V5.300H7.200L10 9.300 12.800 5.300H14.300V15H12.800V7.900L10 11.800 7.200 7.900V15Z" fill="#fff"/></svg><div class="abs" style="left:1544px;top:379px;width:100px;text-align:center;font-size:13.8px;color:#1a1a1a;line-height:15.5px">earned by<br>all houses</div><div class="pl" style="left:1468px;top:256.5px;color:#2a7dc0">Sirius</div><div class="pl" style="left:1722px;top:298px;color:#f4b400">Andromeda</div><div class="pl" style="left:1411.5px;top:419.5px;color:#dc6478">Phoenix</div><div class="pl" style="left:1642px;top:497px;color:#3b9882">Orion</div>
</body></html>
